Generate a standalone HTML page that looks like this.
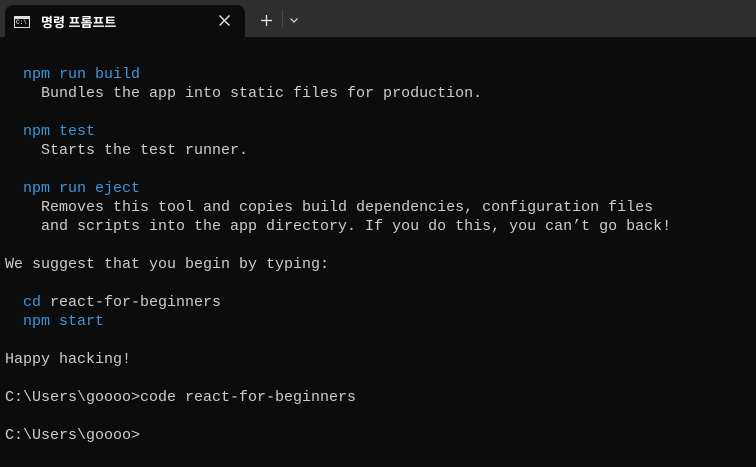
<!DOCTYPE html>
<html><head><meta charset="utf-8"><style>
html,body{margin:0;padding:0;width:756px;height:467px;overflow:hidden;background:#0c0c0c;}
.bar{position:absolute;left:0;top:0;width:756px;height:37px;background:#2e2e2e;}
.tab{position:absolute;left:5px;top:5px;width:240px;height:32px;background:#0c0c0c;border-radius:8px 8px 0 0;}
.title{position:absolute;left:41px;top:12px;font:bold 13px "Liberation Sans","Noto Sans CJK KR",sans-serif;color:#fff;}
.icon{position:absolute;left:14px;top:16px;width:16px;height:12px;border:1px solid #ddd;box-sizing:border-box;}
.icon:before{content:"";position:absolute;left:0;right:0;top:0;height:2px;background:#ddd;}
.icon span{position:absolute;left:1px;top:2px;font:6px "Liberation Mono",monospace;color:#fff;}
.x{position:absolute;left:219px;top:15px;}
.plus{position:absolute;left:261px;top:15px;}
.sep{position:absolute;left:282px;top:10px;width:1px;height:18px;background:#4a4a4a;}
.chev{position:absolute;left:290px;top:18px;}
pre{position:absolute;left:5px;top:65px;margin:0;font:15px/19px "Liberation Mono",monospace;color:#cccccc;}
b{font-weight:normal;color:#3a96dd;}
</style></head><body>
<div class="bar"></div>
<div class="tab"></div>
<div class="icon"><span>C:\</span></div>
<div class="title">명령 프롬프트</div>
<svg class="x" width="11" height="11" viewBox="0 0 11 11"><path d="M0.5 0.5L10.5 10.5M10.5 0.5L0.5 10.5" stroke="#eee" stroke-width="1.3"/></svg>
<svg class="plus" width="11" height="11" viewBox="0 0 11 11"><path d="M5.5 0V11M0 5.5H11" stroke="#eee" stroke-width="1.2"/></svg>
<div class="sep"></div>
<svg class="chev" width="8" height="5" viewBox="0 0 8 5"><path d="M0.5 0.5L4 4L7.5 0.5" stroke="#ddd" stroke-width="1.2" fill="none"/></svg>
<pre>  <b>npm run build</b>
    Bundles the app into static files for production.

  <b>npm test</b>
    Starts the test runner.

  <b>npm run eject</b>
    Removes this tool and copies build dependencies, configuration files
    and scripts into the app directory. If you do this, you can’t go back!

We suggest that you begin by typing:

  <b>cd</b> react-for-beginners
  <b>npm start</b>

Happy hacking!

C:\Users\goooo>code react-for-beginners

C:\Users\goooo></pre>
</body></html>
